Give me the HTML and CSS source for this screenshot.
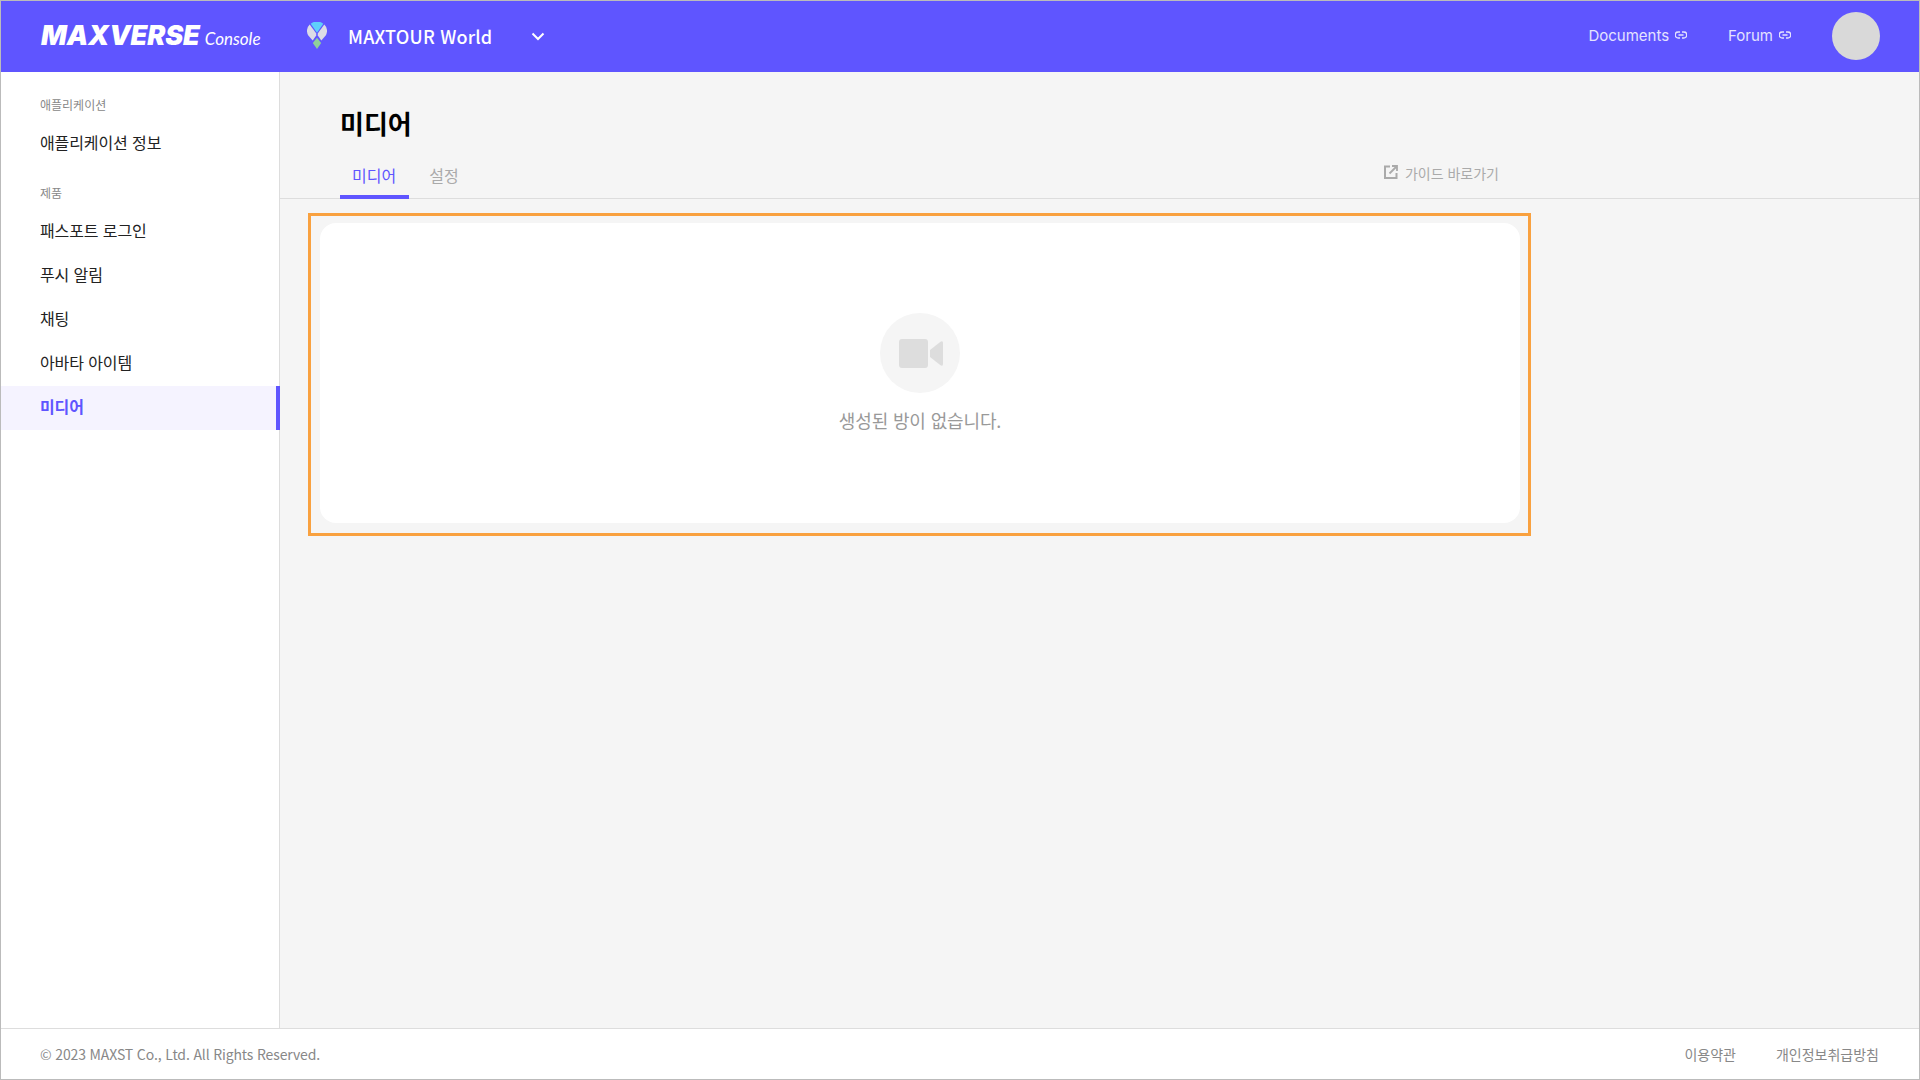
FILE: index.html
```html
<!DOCTYPE html>
<html lang="ko">
<head>
<meta charset="utf-8">
<title>MAXVERSE Console</title>
<link rel="stylesheet" href="styles.css">
</head>
<body>
<div class="page">
  <header class="topbar">
    <div class="brand"><span class="brand-name">MAXVERSE</span><span class="brand-sub">Console</span></div>
    <div class="world">
      <svg class="pin" width="20" height="27" viewBox="0 0 20 27"><path d="M3.700 1.700A10 10 0 0 1 16.300 1.700L10 10.800Z" fill="#5fd0fb"/><path d="M2.700 2.600L9.300 11.600L9.200 13.600L5.700 18.400L1.500 13.800A8.600 8.600 0 0 1 2.700 2.600Z" fill="#dcdce6"/><path d="M17.300 2.600L10.700 11.600L10.800 13.600L14.300 18.400L18.500 13.800A8.600 8.600 0 0 0 17.300 2.600Z" fill="#dcdce6"/><path d="M10 15.800L14.200 21L10 27L5.800 21Z" fill="#8fd09a"/></svg>
      <span class="world-name">MAXTOUR World</span>
      <svg class="chev" width="14" height="9" viewBox="0 0 14 9"><path d="M1.500 1.500L7 7L12.500 1.500" fill="none" stroke="#fff" stroke-width="2"/></svg>
    </div>
    <nav class="toplinks">
      <a class="toplink">Documents <svg width="12" height="8" viewBox="0 0 12 8"><path d="M5 1H3.200a3 3 0 0 0 0 6H5M7 1h1.800a3 3 0 0 1 0 6H7M3.500 4h5" fill="none" stroke="#e4e2ff" stroke-width="1.400"/></svg></a>
      <a class="toplink">Forum <svg width="12" height="8" viewBox="0 0 12 8"><path d="M5 1H3.200a3 3 0 0 0 0 6H5M7 1h1.800a3 3 0 0 1 0 6H7M3.500 4h5" fill="none" stroke="#e4e2ff" stroke-width="1.400"/></svg></a>
    </nav>
    <div class="avatar"></div>
  </header>
  <div class="body">
    <aside class="sidebar">
      <div class="group-label">애플리케이션</div>
      <a class="item">애플리케이션 정보</a>
      <div class="group-label second">제품</div>
      <a class="item">패스포트 로그인</a>
      <a class="item">푸시 알림</a>
      <a class="item">채팅</a>
      <a class="item">아바타 아이템</a>
      <a class="item active">미디어</a>
    </aside>
    <main class="content">
      <div class="head">
        <h1 class="title">미디어</h1>
        <div class="tabbar">
          <a class="tab active">미디어</a>
          <a class="tab">설정</a>
          <a class="guide"><svg width="14" height="14" viewBox="0 0 14 14"><path d="M6 1.500H1V13H12.500V8" fill="none" stroke="#aaa" stroke-width="2"/><path d="M5.500 8.500L12 2M8 1h5v5" fill="none" stroke="#aaa" stroke-width="1.800"/></svg>가이드 바로가기</a>
        </div>
      </div>
      <div class="highlight">
        <section class="card">
          <div class="empty-icon"><svg class="cam" width="44" height="29" viewBox="0 0 44 29"><rect x="0" y="0" width="29" height="29" rx="3" fill="#ddd"/><path d="M31 11L41.500 2.800Q44 1.500 44 4V25Q44 27.500 41.500 26.200L31 18Z" fill="#ddd"/></svg></div>
          <p class="empty-text">생성된 방이 없습니다.</p>
        </section>
      </div>
    </main>
  </div>
  <footer class="footer">
    <span class="copy">© 2023 MAXST Co., Ltd. All Rights Reserved.</span>
    <div class="foot-links"><a>이용약관</a><a>개인정보취급방침</a></div>
  </footer>
</div>
</body>
</html>
```
FILE: styles.css
```css
* { box-sizing: border-box; }
html, body { margin: 0; height: 100%; }
body { font-family: "Noto Sans CJK KR", "Noto Sans", sans-serif; background: #fff; color: #222; }
.page { width: 1920px; height: 1080px; border: 1px solid #bbb; display: flex; flex-direction: column; overflow: hidden; }
.topbar { height: 71px; flex: none; background: #5f55ff; display: flex; align-items: center; color: #fff; padding: 0 0 1px 40px; }
.brand { width: 266px; display: flex; align-items: baseline; gap: 5px; margin-bottom: 2px; }
.brand-name { font-family: Inter, sans-serif; font-weight: 900; font-style: italic; font-size: 27px; letter-spacing: -0.1px; }
.brand-sub { font-family: Lato, sans-serif; font-style: italic; font-size: 17px; }
.world { display: flex; align-items: center; }
.pin { margin-right: 21px; margin-bottom: 2px; }
.world-name { font-size: 18px; font-weight: 500; width: 183px; letter-spacing: 0.2px; }
.toplinks { margin-left: auto; display: flex; gap: 41px; margin-right: 40px; margin-bottom: 2px; transform: translateX(-1px); }
.toplink { font-family: Inter, sans-serif; font-size: 15px; color: #e4e2ff; display: flex; align-items: center; gap: 6px; }
.avatar { width: 48px; height: 48px; border-radius: 50%; background: #d9d9d9; margin-right: 39px; }
.body { flex: 1; display: flex; min-height: 0; }
.sidebar { width: 279px; flex: none; background: #fff; border-right: 1px solid #ddd; padding-top: 23px; }
.group-label { font-size: 12px; line-height: 20px; color: #888; padding-left: 39px; margin-bottom: 7px; }
.group-label.second { margin-top: 17px; }
.item { display: block; height: 44px; line-height: 40px; font-size: 16px; letter-spacing: -0.1px; color: #222; padding-left: 39px; }
.item.active { width: 279px; background: #f5f3ff; color: #5f55ff; font-weight: 700; border-right: 4px solid #5f55ff; }
.content { flex: 1; background: #f5f5f5; }
.head { height: 127px; border-bottom: 1px solid #ddd; padding: 0 0 0 60px; display: flex; flex-direction: column; }
.title { margin: 0; padding-top: 32px; font-size: 26px; line-height: 38px; font-weight: 700; color: #000; }
.tabbar { display: flex; width: 1200px; margin-top: auto; height: 56px; align-items: stretch; position: relative; top: 1px; }
.tab { font-size: 16px; color: #aaa; padding: 20px 12px 0; line-height: 24px; }
.tab.active { color: #5f55ff; border-bottom: 4px solid #5f55ff; margin-right: 8px; padding-right: 13px; }
.guide { margin-left: auto; margin-right: 41px; padding-top: 18px; font-size: 14px; line-height: 24px; color: #aaa; display: flex; align-items: flex-start; gap: 7px; }
.guide svg { margin-top: 4px; }
.highlight { width: 1223px; margin: 14px 0 0 28px; padding: 7px 8px 10px 9px; border: 3px solid #f9a13f; }
.card { height: 300px; background: #fff; border-radius: 16px; display: flex; flex-direction: column; align-items: center; padding-top: 90px; }
.empty-icon { width: 80px; height: 80px; border-radius: 50%; background: #f5f5f5; display: flex; align-items: center; justify-content: center; }
.cam { margin-left: 2px; }
.empty-text { margin: 14px 0 0; font-size: 18px; line-height: 26px; letter-spacing: -0.15px; color: #999; }
.footer { height: 51px; flex: none; border-top: 1px solid #ddd; background: #fff; display: flex; align-items: center; justify-content: space-between; padding: 0 40px 0 39px; font-size: 14px; color: #888; }
.copy { letter-spacing: -0.14px; }
.foot-links { display: flex; gap: 40px; }
```
